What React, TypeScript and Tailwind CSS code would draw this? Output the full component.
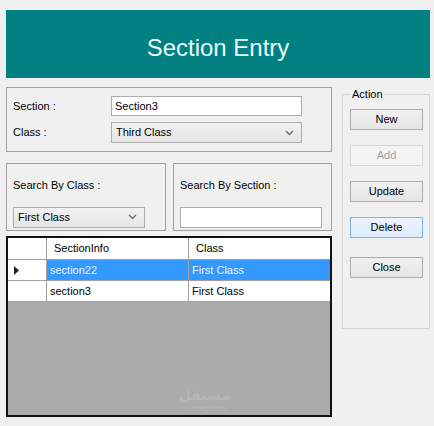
import React from "react"

const font = { fontFamily: '"Liberation Sans", Arial, sans-serif' }

function Chevron() {
  return (
    <svg width="9" height="6" viewBox="0 0 9 6" className="shrink-0">
      <path d="M1 1 L4.5 4.5 L8 1" fill="none" stroke="#6d6d6d" strokeWidth="1.4" />
    </svg>
  )
}

function ComboBox({ value, className }: { value: string; className: string }) {
  return (
    <div
      className={`flex items-center justify-between border border-[#acacac] bg-gradient-to-b from-[#f2f2f2] to-[#e5e5e5] pl-[4px] pr-[7px] text-[11px] text-black ${className}`}
    >
      <span>{value}</span>
      <Chevron />
    </div>
  )
}

function TextBox({ value, className }: { value?: string; className: string }) {
  return (
    <div className={`flex items-center border border-[#abadb3] bg-white px-[3px] text-[11px] text-black ${className}`}>
      {value}
    </div>
  )
}

function Button({ label, disabled, hot }: { label: string; disabled?: boolean; hot?: boolean }) {
  const look = disabled
    ? "border-[#d9d9d9] bg-[#f4f4f4] text-[#a0a0a0]"
    : hot
      ? "border-[#7eb4ea] bg-gradient-to-b from-[#ecf4fc] to-[#dcecfc] text-black"
      : "border-[#acacac] bg-gradient-to-b from-[#f0f0f0] to-[#e5e5e5] text-black"
  return (
    <div className={`flex h-[21px] w-[73px] items-center justify-center border text-[11px] ${look}`}>
      {label}
    </div>
  )
}

const rows = [
  { info: "section22", cls: "First Class", selected: true },
  { info: "section3", cls: "First Class", selected: false },
]

export default function App() {
  return (
    <div className="h-[426px] w-[434px] overflow-hidden bg-[#f0f0f0] pl-[6px] pr-[4px] pt-[10px]" style={font}>
      <div className="flex h-[68px] items-center justify-center bg-[#008080] pt-[8px] text-[24px] text-[#e8fbff]">
        Section Entry
      </div>

      <div className="mt-[9px] flex gap-[10px]">
        <div className="flex w-[326px] flex-col">
          <div className="flex h-[65px] flex-col justify-center gap-[6px] border border-[#a0a0a0] pl-[6px]">
            <div className="flex items-center">
              <span className="w-[98px] text-[11px] text-black">Section :</span>
              <TextBox value="Section3" className="h-[20px] w-[191px]" />
            </div>
            <div className="flex items-center">
              <span className="w-[98px] text-[11px] text-black">Class :</span>
              <ComboBox value="Third Class" className="h-[21px] w-[191px]" />
            </div>
          </div>

          <div className="mt-[11px] flex gap-[7px]">
            <div className="flex h-[68px] w-[160px] flex-col border border-[#a0a0a0] pl-[6px] pt-[13px]">
              <span className="text-[11px] text-black">Search By Class :</span>
              <ComboBox value="First Class" className="mt-[13px] h-[21px] w-[132px]" />
            </div>
            <div className="flex h-[68px] w-[159px] flex-col border border-[#a0a0a0] pl-[6px] pt-[13px]">
              <span className="text-[11px] text-black">Search By Section :</span>
              <TextBox className="mt-[13px] h-[21px] w-[142px]" />
            </div>
          </div>

          <div className="relative mt-[5px] flex h-[181px] flex-col border-2 border-[#111] bg-[#ababab]">
            <div className="flex h-[22px] bg-white text-[11px] text-black">
              <div className="w-[39px] border-r border-b border-[#a0a0a0]" />
              <div className="flex w-[142px] items-center border-r border-b border-[#a0a0a0] pl-[7px]">SectionInfo</div>
              <div className="flex flex-1 items-center border-b border-[#a0a0a0] pl-[7px]">Class</div>
            </div>
            {rows.map((r) => (
              <div key={r.info} className="flex h-[21px] text-[11px]">
                <div className="flex w-[39px] items-center border-r border-b border-[#a0a0a0] bg-white pl-[6px]">
                  {r.selected && (
                    <svg width="5" height="9" viewBox="0 0 5 9">
                      <path d="M0 0 L5 4.5 L0 9 Z" fill="#222" />
                    </svg>
                  )}
                </div>
                <div
                  className={`flex w-[142px] items-center border-r border-b border-[#a0a0a0] pl-[3px] ${
                    r.selected ? "bg-[#3399ff] text-[#eaf4ff]" : "bg-white text-black"
                  }`}
                >
                  {r.info}
                </div>
                <div
                  className={`flex flex-1 items-center border-b border-[#a0a0a0] pl-[3px] ${
                    r.selected ? "bg-[#3399ff] text-[#eaf4ff]" : "bg-white text-black"
                  }`}
                >
                  {r.cls}
                </div>
              </div>
            ))}
            <div className="absolute bottom-[2px] right-[100px] flex flex-col items-center gap-[3px] text-[#b6b6b6]">
              <span className="text-[14px] font-bold leading-[14px]" style={{ fontFamily: '"DejaVu Sans", sans-serif' }}>مستقل</span>
              <span className="text-[8px] leading-[8px]">mostaql.com</span>
            </div>
          </div>
        </div>

        <fieldset className="mt-[-1px] h-[243px] w-[90px] border border-[#d5d5d5] pl-[7px]">
          <legend className="ml-[1px] px-[1px] text-[11px] text-black">Action</legend>
          <div className="mt-[6px] flex flex-col">
            <Button label="New" />
            <div className="mt-[15px]">
              <Button label="Add" disabled />
            </div>
            <div className="mt-[15px]">
              <Button label="Update" />
            </div>
            <div className="mt-[15px]">
              <Button label="Delete" hot />
            </div>
            <div className="mt-[19px]">
              <Button label="Close" />
            </div>
          </div>
        </fieldset>
      </div>
    </div>
  )
}
